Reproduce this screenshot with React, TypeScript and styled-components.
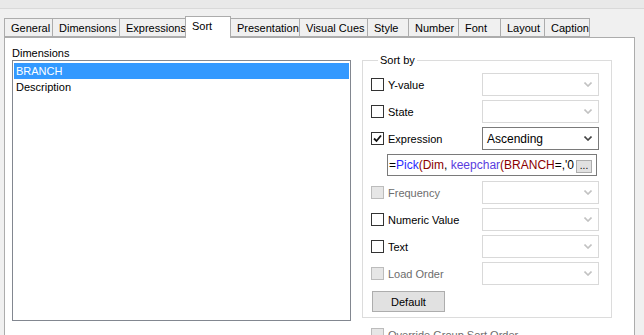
import React from 'react'
import styled, { createGlobalStyle } from 'styled-components'

const Global = createGlobalStyle`
  html, body {
    margin: 0;
    padding: 0;
    overflow: hidden;
    background: #f0f0f0;
    font-family: "Liberation Sans", Arial, sans-serif;
    font-size: 11px;
    color: #000;
  }
`

const Window = styled.div`
  width: 644px;
  height: 335px;
  overflow: hidden;
  background: #f0f0f0;
`

const TitleStrip = styled.div`
  height: 8px;
  background: #e9e9e9;
  border-bottom: 1px solid #d9d9d9;
`

const TabRow = styled.div`
  display: flex;
  align-items: flex-end;
  height: 28px;
  padding-left: 4px;
`

const Tab = styled.div<{ $w: number; $active?: boolean }>`
  box-sizing: border-box;
  width: ${p => p.$w}px;
  height: ${p => (p.$active ? 22 : 19)}px;
  margin-bottom: ${p => (p.$active ? -1 : 0)}px;
  margin-left: -1px;
  padding-left: 6px;
  padding-top: 3px;
  border: 1px solid #acacac;
  border-bottom: ${p => (p.$active ? 'none' : '1px solid #acacac')};
  background: ${p => (p.$active ? '#ffffff' : '#f0f0f0')};
  position: relative;
  z-index: ${p => (p.$active ? 2 : 1)};
  white-space: nowrap;
  &:first-child { margin-left: 0; }
`

const Panel = styled.div`
  box-sizing: border-box;
  width: 631px;
  height: 310px;
  margin-left: 4px;
  background: #ffffff;
  border: 1px solid #acacac;
  display: flex;
  padding: 9px 0 0 7px;
`

const LeftCol = styled.div`
  width: 339px;
  display: flex;
  flex-direction: column;
`

const Label = styled.div`
  height: 13px;
  line-height: 13px;
`

const ListBox = styled.div`
  box-sizing: border-box;
  width: 339px;
  height: 261px;
  border: 1px solid #828790;
  padding: 2px 1px;
`

const ListItem = styled.div<{ $selected?: boolean }>`
  height: 16px;
  line-height: 16px;
  padding-left: 2px;
  background: ${p => (p.$selected ? '#3399ff' : 'transparent')};
  color: ${p => (p.$selected ? '#ffffff' : '#000000')};
`

const RightCol = styled.div`
  margin-left: 11px;
  display: flex;
  flex-direction: column;
`

const Group = styled.fieldset`
  box-sizing: border-box;
  width: 250px;
  margin: 7px 0 0 0;
  padding: 6px 11px 5px 8px;
  border: 1px solid #dcdcdc;
  display: flex;
  flex-direction: column;
  gap: 4px;
`

const Legend = styled.legend`
  padding: 0 2px;
  margin-left: 7px;
  line-height: 13px;
`

const Row = styled.div<{ $extra?: number }>`
  display: grid;
  grid-template-columns: 111px 117px;
  align-items: center;
  height: 23px;
  margin-top: ${p => p.$extra || 0}px;
`

const CheckLabel = styled.label<{ $disabled?: boolean }>`
  display: flex;
  align-items: center;
  gap: 4px;
  color: ${p => (p.$disabled ? '#6d6d6d' : '#000000')};
  white-space: nowrap;
`

const Box = styled.span<{ $disabled?: boolean }>`
  box-sizing: border-box;
  width: 13px;
  height: 13px;
  border: 1px solid ${p => (p.$disabled ? '#bcbcbc' : '#333333')};
  background: ${p => (p.$disabled ? '#e6e6e6' : '#ffffff')};
  display: flex;
  align-items: center;
  justify-content: center;
`

const Combo = styled.div<{ $enabled?: boolean }>`
  box-sizing: border-box;
  height: 23px;
  border: 1px solid ${p => (p.$enabled ? '#7a7a7a' : '#d9d9d9')};
  background: #ffffff;
  display: flex;
  align-items: center;
  justify-content: space-between;
  padding: 0 6px 0 4px;
  font-size: 12px;
`

const EditRow = styled.div`
  padding-left: 16px;
  height: 22px;
`

const Edit = styled.div`
  box-sizing: border-box;
  width: 210px;
  height: 22px;
  border: 1px solid #7a7a7a;
  display: flex;
  align-items: center;
  padding-left: 1px;
  font-size: 12px;
  white-space: nowrap;
  overflow: hidden;
  position: relative;
`

const Tok = styled.span<{ $c: string }>`
  color: ${p => p.$c};
`

const Ellipsis = styled.div`
  position: absolute;
  right: 4px;
  top: 5px;
  box-sizing: border-box;
  width: 16px;
  height: 13px;
  background: #e1e1e1;
  border: 1px solid #adadad;
  font-size: 10px;
  line-height: 9px;
  text-align: center;
`

const Button = styled.div`
  box-sizing: border-box;
  width: 73px;
  height: 21px;
  margin-left: 1px;
  margin-top: 2px;
  background: #e1e1e1;
  border: 1px solid #adadad;
  display: flex;
  align-items: center;
  justify-content: center;
`

const Override = styled.div`
  margin-top: 10px;
  margin-left: 9px;
`

const Chevron = ({ dark }: { dark?: boolean }) => (
  <svg width="8" height="5" viewBox="0 0 8 5">
    <polyline points="0.5,0.5 4,4 7.5,0.5" fill="none" stroke={dark ? '#444' : '#c2c2c2'} strokeWidth="1.6" />
  </svg>
)

const Check = ({ checked, disabled }: { checked?: boolean; disabled?: boolean }) => (
  <Box $disabled={disabled}>
    {checked && (
      <svg width="9" height="9" viewBox="0 0 9 9">
        <polyline points="1,4.5 3.5,7 8,1.5" fill="none" stroke="#111" strokeWidth="1.8" />
      </svg>
    )}
  </Box>
)

const tabs = [
  { t: 'General', w: 49 },
  { t: 'Dimensions', w: 68 },
  { t: 'Expressions', w: 67 },
  { t: 'Sort', w: 46, active: true },
  { t: 'Presentation', w: 70 },
  { t: 'Visual Cues', w: 69 },
  { t: 'Style', w: 42 },
  { t: 'Number', w: 51 },
  { t: 'Font', w: 43 },
  { t: 'Layout', w: 45 },
  { t: 'Caption', w: 46 },
]

const sortRows = [
  { label: 'Frequency', disabled: true },
  { label: 'Numeric Value' },
  { label: 'Text' },
  { label: 'Load Order', disabled: true },
]

export default function App() {
  return (
    <Window>
      <Global />
      <TitleStrip />
      <TabRow>
        {tabs.map(tab => (
          <Tab key={tab.t} $w={tab.w} $active={tab.active}>{tab.t}</Tab>
        ))}
      </TabRow>
      <Panel>
        <LeftCol>
          <Label>Dimensions</Label>
          <ListBox>
            <ListItem $selected>BRANCH</ListItem>
            <ListItem>Description</ListItem>
          </ListBox>
        </LeftCol>
        <RightCol>
          <Group>
            <Legend>Sort by</Legend>
            <Row>
              <CheckLabel><Check />Y-value</CheckLabel>
              <Combo><span /><Chevron /></Combo>
            </Row>
            <Row>
              <CheckLabel><Check />State</CheckLabel>
              <Combo><span /><Chevron /></Combo>
            </Row>
            <Row>
              <CheckLabel><Check checked />Expression</CheckLabel>
              <Combo $enabled><span>Ascending</span><Chevron dark /></Combo>
            </Row>
            <EditRow>
              <Edit>
                <Tok $c="#000">=</Tok>
                <Tok $c="#2b2bff">Pick</Tok>
                <Tok $c="#8b0000">(Dim</Tok>
                <Tok $c="#000">,&nbsp;</Tok>
                <Tok $c="#5a3ce0">keepchar</Tok>
                <Tok $c="#8b0000">(BRANCH</Tok>
                <Tok $c="#000">=,'0</Tok>
                <Ellipsis>...</Ellipsis>
              </Edit>
            </EditRow>
            {sortRows.map((r, i) => (
              <Row key={r.label} $extra={i === 0 ? 1 : 0}>
                <CheckLabel $disabled={r.disabled}><Check disabled={r.disabled} />{r.label}</CheckLabel>
                <Combo><span /><Chevron /></Combo>
              </Row>
            ))}
            <Button>Default</Button>
          </Group>
          <Override>
            <CheckLabel $disabled><Check disabled />Override Group Sort Order</CheckLabel>
          </Override>
        </RightCol>
      </Panel>
    </Window>
  )
}
